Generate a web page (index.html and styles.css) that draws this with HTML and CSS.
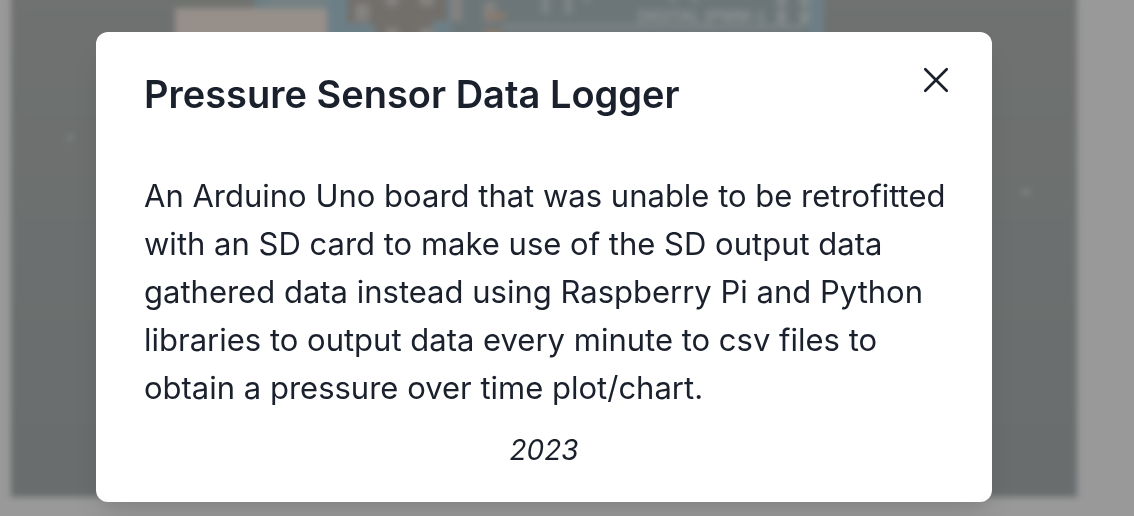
FILE: index.html
```html
<!DOCTYPE html>
<html lang="en">
<head>
<meta charset="utf-8">
<meta name="viewport" content="width=device-width, initial-scale=1">
<title>Pressure Sensor Data Logger</title>
<link rel="stylesheet" href="styles.css">
</head>
<body class="page">
<div class="backdrop" aria-hidden="true">
  <svg class="photo" viewBox="0 0 1065 496" preserveAspectRatio="none">
    <defs>
      <filter id="soft" x="-5%" y="-5%" width="110%" height="110%" color-interpolation-filters="sRGB"><feGaussianBlur stdDeviation="3"/></filter>
      <filter id="glow" x="-10%" y="-50%" width="120%" height="200%" color-interpolation-filters="sRGB"><feGaussianBlur stdDeviation="3"/></filter>
      <linearGradient id="mat" x1="0" y1="0" x2="0" y2="1">
        <stop offset="0" stop-color="#6f7270"/><stop offset="1" stop-color="#696d6e"/>
      </linearGradient>
    </defs>
    <rect x="-1" y="-20" width="1066" height="517" fill="url(#mat)" filter="url(#soft)"/>
    <g filter="url(#glow)">
      <rect x="240" y="-10" width="572" height="80" fill="#6d7f86"/>
      <rect x="440" y="-10" width="356" height="80" fill="#6c7678"/>
      <rect x="163" y="8" width="152" height="60" fill="#978f8a"/>
      <rect x="163" y="-8" width="80" height="14" fill="#707370"/>
      <rect x="254" y="-8" width="61" height="14" fill="#758184"/>
      <path d="M335-5h100v26h-15v24h-50l-10-22h-25z" fill="#726f6b"/>
      <path d="M343 4h14v17h-14zM374-5h12v11h-12zM408-5h14v11h-14zM374 28h12v12h-12zM408 28h14v12h-14zM440-5h10v26h-10zM472 2h12v20h-12z" fill="#858380"/>
      <path d="M475 12h19v8h-19zM472 29h18v9h-18z" fill="#88796f"/>
      <path d="M530-5h7v19h-7zM553-5h7v19h-7zM658-5h6v7h-6zM680-5h6v7h-6zM572-5h5v7h-5z" fill="#7f8686"/>
      <rect x="490" y="24" width="302" height="6" fill="#7b8284"/>
      <path d="M765-5h9v12h-9zM765 10h9v14h-9zM788-5h9v12h-9zM788 10h9v14h-9z" fill="#848a8a"/>
      <text class="photo-label" x="626" y="22">DIGITAL (PWM~)</text>
    </g>
    <g filter="url(#glow)" fill="#7a7f7f">
      <circle cx="58" cy="138" r="4"/><circle cx="1014" cy="192" r="5"/>
    </g>
  </svg>
</div>
<main class="overlay">
  <section class="modal" role="dialog" aria-modal="true" aria-labelledby="modal-title">
    <header class="modal-header"><h1 class="modal-title" id="modal-title">Pressure Sensor Data Logger</h1></header>
    <button class="modal-close" type="button" aria-label="Close">
      <svg class="close-icon" viewBox="0 0 24 24" aria-hidden="true"><path d="M1.3 1.3l21.4 21.4M22.7 1.3L1.3 22.7"/></svg>
    </button>
    <div class="modal-body">
      <p class="description">An Arduino Uno board that was unable to be retrofitted with an SD card to make use of the SD output data gathered data instead using Raspberry Pi and Python libraries to output data every minute to csv files to obtain a pressure over time plot/chart.</p>
    </div>
    <footer class="modal-footer"><time class="year" datetime="2023">2023</time></footer>
  </section>
</main>
</body>
</html>
```
FILE: styles.css
```css
* {
  box-sizing: border-box;
}

.page {
  margin: 0;
  min-height: 100vh;
  overflow: hidden;
  background: #999;
  color: #1a202c;
  font-family: Inter, "Liberation Sans", sans-serif;
}

.backdrop {
  position: fixed;
  inset: 0;
  padding: 0 57px 20px 12px;
}

.photo {
  display: block;
  width: 100%;
  height: 100%;
  overflow: visible;
}

.photo-label {
  fill: #8f9595;
  font-family: "Liberation Sans", sans-serif;
  font-size: 16px;
  font-weight: 700;
}

.overlay {
  position: relative;
  padding: 32px 142px 14px 96px;
}

.modal {
  position: relative;
  border-radius: 12px;
  background: #fff;
  box-shadow: 0 20px 30px -6px rgb(0 0 0 / 10%), 0 8px 12px -4px rgb(0 0 0 / 5%);
}

.modal-header {
  padding: 32px 48px;
}

.modal-title {
  margin: 0;
  font-size: 38px;
  font-weight: 600;
  line-height: 60px;
}

.modal-close {
  position: absolute;
  top: 16px;
  right: 24px;
  display: flex;
  align-items: center;
  justify-content: center;
  width: 64px;
  height: 64px;
  padding: 0;
  border: 0;
  border-radius: 12px;
  background: transparent;
  color: inherit;
  cursor: pointer;
}

.close-icon {
  width: 24px;
  height: 24px;
  fill: none;
  stroke: currentColor;
  stroke-width: 2.7;
  stroke-linecap: round;
  overflow: visible;
}

.modal-body {
  padding: 16px 32px 16px 48px;
}

.description {
  margin: 0;
  font-size: 31px;
  line-height: 48px;
}

.modal-footer {
  padding: 0 48px 30px;
  text-align: center;
}

.year {
  display: block;
  font-size: 28px;
  font-style: italic;
  line-height: 44px;
}
```
